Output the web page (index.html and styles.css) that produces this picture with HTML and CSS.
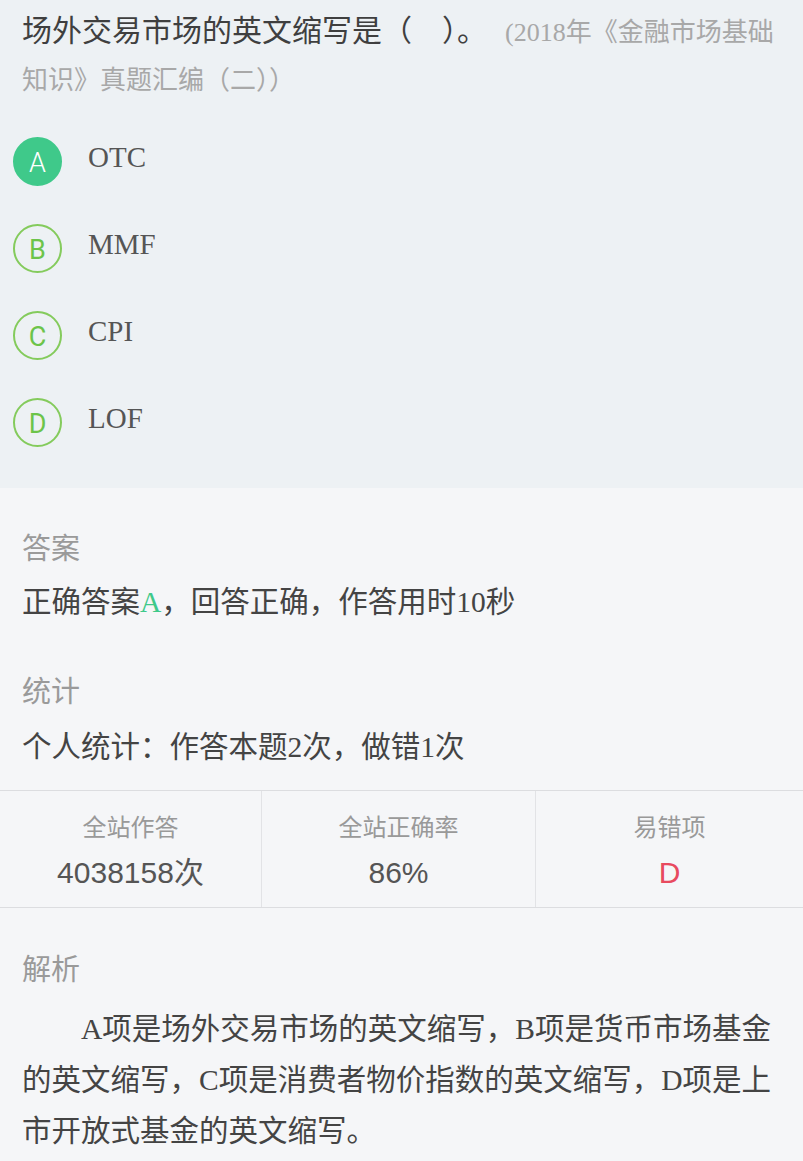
FILE: index.html
```html
<!DOCTYPE html>
<html lang="zh-CN">
<head>
<meta charset="utf-8">
<title>场外交易市场的英文缩写</title>
<link rel="stylesheet" href="styles.css">
</head>
<body>
<div class="page">
  <section class="question">
    <h1 class="title">场外交易市场的英文缩写是（　）。<span class="source">(2018年《金融市场基础知识》真题汇编（二））</span></h1>
    <ul class="options">
      <li class="option"><span class="badge badge-correct">A</span><span class="opt-text">OTC</span></li>
      <li class="option"><span class="badge">B</span><span class="opt-text">MMF</span></li>
      <li class="option"><span class="badge">C</span><span class="opt-text">CPI</span></li>
      <li class="option"><span class="badge">D</span><span class="opt-text">LOF</span></li>
    </ul>
  </section>

  <section class="detail">
    <div class="block">
      <div class="label">答案</div>
      <div class="content">正确答案<span class="green">A</span>，回答正确，作答用时10秒</div>
    </div>
    <div class="block block-stat">
      <div class="label">统计</div>
      <div class="content">个人统计：作答本题2次，做错1次</div>
    </div>
  </section>

  <div class="stats">
    <div class="stat">
      <div class="stat-label">全站作答</div>
      <div class="stat-value">4038158次</div>
    </div>
    <div class="stat">
      <div class="stat-label">全站正确率</div>
      <div class="stat-value">86%</div>
    </div>
    <div class="stat">
      <div class="stat-label">易错项</div>
      <div class="stat-value stat-value-wrong">D</div>
    </div>
  </div>

  <section class="detail analysis">
    <div class="label">解析</div>
    <p class="para">A项是场外交易市场的英文缩写，B项是货币市场基金的英文缩写，C项是消费者物价指数的英文缩写，D项是上市开放式基金的英文缩写。</p>
  </section>
</div>
</body>
</html>
```

FILE: styles.css
```css
* { box-sizing: border-box; }

html, body {
  margin: 0;
  padding: 0;
  background: #f5f6f8;
}

body {
  font-family: "Liberation Serif", "Noto Sans CJK SC", serif;
  color: #444;
  width: 803px;
  height: 1161px;
  overflow: hidden;
}

.question {
  background: #edf1f4;
  padding: 8px 0 22px;
}

.title {
  margin: 0;
  padding: 0 22px;
  font-weight: normal;
  font-size: 30px;
  line-height: 46px;
  color: #3f3f3f;
}

.source {
  font-size: 26px;
  color: #a8a8a8;
  margin-left: 18px;
}

.options {
  list-style: none;
  margin: 14px 0 0;
  padding: 0 13px;
}

.option {
  display: flex;
  align-items: center;
  height: 87px;
}

.badge {
  flex: none;
  width: 49px;
  height: 49px;
  border-radius: 50%;
  border: 2px solid #84cb5c;
  color: #6cc44a;
  display: flex;
  align-items: center;
  justify-content: center;
  font-family: Roboto, "Liberation Sans", sans-serif;
  font-weight: 400;
  font-size: 27px;
  padding-top: 3px;
}

.badge-correct {
  background: #3fc98a;
  border-color: #3fc98a;
  color: #fff;
  font-weight: 300;
}

.opt-text {
  margin-left: 26px;
  font-size: 29px;
  color: #555;
  margin-top: -8px;
}

.detail {
  padding: 36px 22px 0;
}

.label {
  font-size: 29px;
  line-height: 44px;
  color: #9a9a9a;
  font-family: "Noto Sans CJK SC", sans-serif;
}

.content {
  margin-top: 12px;
  font-size: 29.5px;
  line-height: 44px;
  color: #444;
}

.block-stat {
  margin-top: 43px;
}

.block-stat .content {
  margin-top: 14px;
}

.green { color: #3fc98a; }

.stats {
  margin-top: 21px;
  display: grid;
  grid-template-columns: 261px 274px 1fr;
  border-top: 1px solid #dcdde0;
  border-bottom: 1px solid #dcdde0;
}

.stat {
  text-align: center;
  padding: 17px 0 12px;
}

.stat + .stat {
  border-left: 1px solid #e2e3e6;
}

.stat-label {
  font-family: "Noto Sans CJK SC", sans-serif;
  font-size: 24px;
  line-height: 36px;
  color: #999;
}

.stat-value {
  margin-top: 7px;
  font-family: "Liberation Sans", "Noto Sans CJK SC", sans-serif;
  font-size: 30px;
  line-height: 44px;
  color: #555;
}

.stat-value-wrong {
  color: #e84a5f;
}

.analysis {
  padding-top: 37px;
}

.para {
  margin: 15px 0 0;
  font-size: 29.5px;
  line-height: 51px;
  text-indent: 2em;
  color: #444;
}
```
